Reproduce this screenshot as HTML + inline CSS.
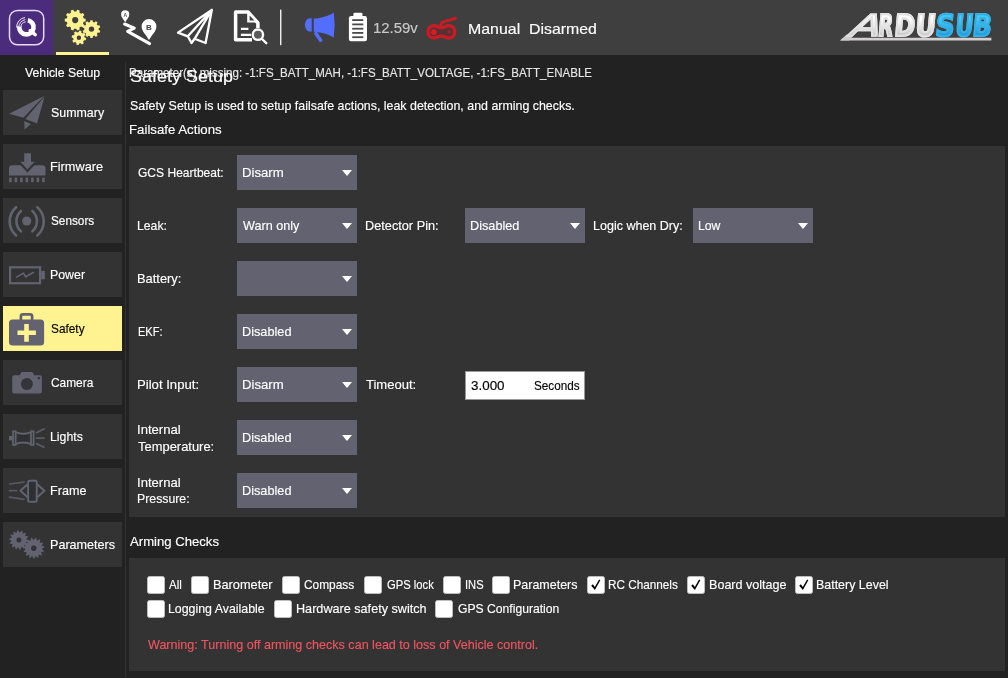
<!DOCTYPE html>
<html>
<head>
<meta charset="utf-8">
<title>Safety Setup</title>
<style>
html,body{margin:0;padding:0;}
body{width:1008px;height:678px;overflow:hidden;background:#222222;position:relative;
 font-family:"Liberation Sans",sans-serif;font-size:13px;color:#ffffff;}
.abs{position:absolute;}
.t{position:absolute;white-space:nowrap;color:#fff;transform-origin:0 0;-webkit-text-stroke:0.15px currentColor;}
#toolbar{left:0;top:0;width:1008px;height:55px;background:#3f3f3f;}
#qbox{left:0;top:0;width:53px;height:55px;background:#4b2c7c;}
.panel{position:absolute;background:#333333;}
.sb{position:absolute;left:3px;width:119px;height:45px;background:#333333;}
.sb.sel{background:#fff291;}
.combo{position:absolute;width:120px;height:35px;background:#626270;}
.combo:after{content:"";position:absolute;left:105px;top:14.5px;border-left:5px solid transparent;border-right:5px solid transparent;border-top:6px solid #fff;}
.cb{position:absolute;width:16px;height:16px;background:#fff;border:1px solid #bdbdbd;border-radius:2.5px;}
.cb svg{position:absolute;left:0;top:0;width:16px;height:16px;}
svg{position:absolute;overflow:visible;}
.logo{position:absolute;left:0;white-space:nowrap;font-family:"DejaVu Sans","Liberation Sans",sans-serif;font-weight:bold;}
.logo span{display:inline-block;transform-origin:0 23px;color:transparent;-webkit-background-clip:text;background-clip:text;paint-order:stroke fill;}
</style>
</head>
<body>
<div class="abs" style="left:0;top:0;width:1008px;height:678px;will-change:transform;">
<div id="toolbar" class="abs"></div>
<div id="qbox" class="abs"></div>
<div class="abs" style="left:56px;top:52px;width:53px;height:2.5px;background:#fff291;"></div>
<svg class="abs" style="left:0;top:0;" width="1008" height="55" viewBox="0 0 1008 55">
<rect x="9.5" y="10.4" width="34.2" height="34.4" rx="8" ry="8" fill="none" stroke="#ead9ff" stroke-width="1.5"/>
<path d="M27.90 20.16 A7.2 7.2 0 1 1 19.23 26.57" fill="none" stroke="#ffffff" stroke-width="4.6" stroke-linecap="butt"/>
<path d="M30.2 30.6 L35.2 34.6" stroke="#ffffff" stroke-width="3.4" stroke-linecap="round"/>
<path d="M21.00 27.39 A5.4 5.4 0 0 1 25.65 21.85" fill="none" stroke="#f0e4ff" stroke-width="1.0" stroke-linecap="butt"/>
<path d="M18.80 27.47 A7.6 7.6 0 0 1 25.34 19.67" fill="none" stroke="#f0e4ff" stroke-width="1.0" stroke-linecap="butt"/>
<path d="M16.61 27.54 A9.8 9.8 0 0 1 25.04 17.50" fill="none" stroke="#f0e4ff" stroke-width="1.0" stroke-linecap="butt"/>
<path fill="#fff291" fill-rule="evenodd" d="M83.64 18.44 L85.62 18.78 L85.62 21.42 L83.64 21.76 L83.00 23.71 L84.40 25.16 L82.85 27.29 L81.05 26.41 L79.39 27.61 L79.67 29.60 L77.17 30.41 L76.22 28.64 L74.18 28.64 L73.23 30.41 L70.73 29.60 L71.01 27.61 L69.35 26.41 L67.55 27.29 L66.00 25.16 L67.40 23.71 L66.76 21.76 L64.78 21.42 L64.78 18.78 L66.76 18.44 L67.40 16.49 L66.00 15.04 L67.55 12.91 L69.35 13.79 L71.01 12.59 L70.73 10.60 L73.23 9.79 L74.18 11.56 L76.22 11.56 L77.17 9.79 L79.67 10.60 L79.39 12.59 L81.05 13.79 L82.85 12.91 L84.40 15.04 L83.00 16.49 Z M78.30 20.10 A3.10 3.10 0 1 0 72.10 20.10 A3.10 3.10 0 1 0 78.30 20.10 Z"/>
<path fill="#fff291" fill-rule="evenodd" d="M98.65 29.93 L100.25 30.73 L99.57 32.86 L97.80 32.58 L96.80 33.97 L97.62 35.56 L95.82 36.88 L94.55 35.62 L92.92 36.16 L92.65 37.93 L90.42 37.93 L90.14 36.17 L88.50 35.65 L87.24 36.92 L85.43 35.61 L86.24 34.02 L85.23 32.63 L83.46 32.92 L82.76 30.80 L84.35 29.99 L84.35 28.27 L82.75 27.47 L83.43 25.34 L85.20 25.62 L86.20 24.23 L85.38 22.64 L87.18 21.32 L88.45 22.58 L90.08 22.04 L90.35 20.27 L92.58 20.27 L92.86 22.03 L94.50 22.55 L95.76 21.28 L97.57 22.59 L96.76 24.18 L97.77 25.57 L99.54 25.28 L100.24 27.40 L98.65 28.21 Z M94.20 29.10 A2.70 2.70 0 1 0 88.80 29.10 A2.70 2.70 0 1 0 94.20 29.10 Z"/>
<path fill="#fff291" fill-rule="evenodd" d="M84.59 37.55 L86.19 38.11 L85.74 40.35 L84.05 40.25 L83.10 41.65 L83.84 43.18 L81.93 44.44 L80.81 43.17 L79.15 43.49 L78.59 45.09 L76.35 44.64 L76.45 42.95 L75.05 42.00 L73.52 42.74 L72.26 40.83 L73.53 39.71 L73.21 38.05 L71.61 37.49 L72.06 35.25 L73.75 35.35 L74.70 33.95 L73.96 32.42 L75.87 31.16 L76.99 32.43 L78.65 32.11 L79.21 30.51 L81.45 30.96 L81.35 32.65 L82.75 33.60 L84.28 32.86 L85.54 34.77 L84.27 35.89 Z M81.10 37.80 A2.20 2.20 0 1 0 76.70 37.80 A2.20 2.20 0 1 0 81.10 37.80 Z"/>
<path d="M125.2 22.2 C123.6 19.2 121.1 17.2 121.1 14.4 A4.1 4.1 0 1 1 129.3 14.4 C129.3 17.2 126.8 19.2 125.2 22.2 Z" fill="#fff"/>
<path d="M149 40 C146 34.5 141.6 31 141.6 26.4 A7.4 7.4 0 1 1 156.4 26.4 C156.4 31 152 34.5 149 40 Z" fill="#fff"/>
<path d="M124.6 24 L134.3 28.1 L127.6 31.4 L149.6 43.6" fill="none" stroke="#fff" stroke-width="3" stroke-linecap="round" stroke-linejoin="round"/>
<text x="125.2" y="16.6" font-size="5" font-weight="bold" text-anchor="middle" fill="#555" font-family="Liberation Sans, sans-serif">A</text>
<text x="149" y="29.6" font-size="8" font-weight="bold" text-anchor="middle" fill="#444" font-family="Liberation Sans, sans-serif">B</text>
<path d="M211.8 10 L178 32.6 L187.8 36.3 L191.5 43 L194.6 38.8 L205.6 43 Z M211.8 10 L187.8 36.3 M211.8 10 L194.6 38.8" fill="none" stroke="#fff" stroke-width="2.3" stroke-linejoin="round" stroke-linecap="round"/>
<path d="M252 39.7 L235.6 39.7 L235.6 12 L248 12 L257.9 23 L257.9 28" fill="none" stroke="#fff" stroke-width="3.5" stroke-linejoin="round"/>
<path d="M247.2 12 L247.2 22.4 L257.9 22.4 Z" fill="#fff"/>
<path d="M249.6 15.6 L249.6 20.6 L254.4 20.6 Z" fill="#3f3f3f"/>
<path d="M240.9 28.9 L248.4 28.9 M240.9 34.9 L251 34.9" stroke="#fff" stroke-width="2.4"/>
<circle cx="257.9" cy="34.7" r="5.2" fill="#5a5a5a" stroke="#fff" stroke-width="2.4"/>
<path d="M262 39 L266.3 43.2" stroke="#fff" stroke-width="2.4" stroke-linecap="round"/>
<rect x="280.1" y="9.6" width="1.3" height="35.6" fill="#fff"/>
<path d="M311.7 18.2 L309.5 18.2 A4.6 6.6 0 0 0 309.5 31.4 L311.7 31.4 Z" fill="#536dff"/>
<path d="M313.8 18.6 C322 18 329 15.5 333.8 12.4 Q335.4 25 333.8 37.6 C329 34.5 322 32.2 313.8 31.8 Z" fill="#536dff"/>
<path d="M316 33.6 L320.6 40.2" stroke="#536dff" stroke-width="3.6" stroke-linecap="round"/>
<rect x="348.9" y="16.1" width="18.1" height="25.2" rx="2.2" fill="#fff"/>
<rect x="353.4" y="12.8" width="9.1" height="5" rx="1.2" fill="#fff"/>
<rect x="352.2" y="19.2" width="11.1" height="1.8" fill="#4a4a4a"/>
<rect x="352.2" y="23.5" width="11.1" height="1.8" fill="#4a4a4a"/>
<rect x="352.2" y="27.8" width="11.1" height="1.8" fill="#4a4a4a"/>
<rect x="352.2" y="32.0" width="11.1" height="1.8" fill="#4a4a4a"/>
<rect x="352.2" y="36.3" width="11.1" height="1.8" fill="#4a4a4a"/>
<path d="M434 25.8 C437.2 25.8 438.6 27.8 441.4 27.8 C444.2 27.8 445.6 25.8 448.8 25.8 C452.8 25.8 454.7 28.6 454.7 31.9 C454.7 35.2 452.8 37.9 448.8 37.9 C445.6 37.9 444.2 35.9 441.4 35.9 C438.6 35.9 437.2 37.9 434 37.9 C430 37.9 428.1 35.2 428.1 31.9 C428.1 28.6 430 25.8 434 25.8 Z" fill="#7a1a20" fill-opacity="0.35" stroke="#c41d26" stroke-width="3.5"/>
<circle cx="433.8" cy="32.2" r="2.9" fill="#e01822"/>
<circle cx="449" cy="31.9" r="1.8" fill="#c41d26" opacity="0.7"/>
<path d="M440.8 25 C440.8 20.5 447 21.5 455.4 18.2" fill="none" stroke="#c41d26" stroke-width="3.1" stroke-linecap="round"/>
<defs><linearGradient id="gw" x1="0" y1="0.2" x2="0" y2="0.85"><stop offset="0" stop-color="#ffffff"/><stop offset="1" stop-color="#c4c4c4"/></linearGradient>
<linearGradient id="gb" x1="0" y1="0.2" x2="0" y2="0.85"><stop offset="0" stop-color="#45c8f4"/><stop offset="1" stop-color="#2196d6"/></linearGradient></defs>
<path d="M840 40.5 L843 37.8 L991.4 37.8 L991.4 40.5 Z" fill="#d4cfcf"/>
<path d="M840.3 40.5 L846.6 34.6 L854.6 34.6 L849 40.5 Z" fill="#cbcbcb"/>
</svg>
<div class="logo" style="top:12.80px;font-size:24px;line-height:30px;height:30px;"><span style="font-weight:normal;transform:translate(846.74px,0) skewX(-27.4deg) scale(1.850,1.245);background-image:linear-gradient(#ffffff 30%,#c2c2c2 80%);-webkit-text-stroke:1.2px #e2e2e2;">A</span><span style="font-weight:bold;transform:translate(861.40px,0) skewX(-5deg) scale(0.790,1.245);background-image:linear-gradient(#ffffff 30%,#c2c2c2 80%);-webkit-text-stroke:1.8px #e2e2e2;">R</span><span style="font-weight:bold;transform:translate(858.65px,0) skewX(-5deg) scale(1.026,1.245);background-image:linear-gradient(#ffffff 30%,#c2c2c2 80%);-webkit-text-stroke:1.8px #e2e2e2;">D</span><span style="font-weight:bold;transform:translate(859.70px,0) skewX(-5deg) scale(1.040,1.245);background-image:linear-gradient(#ffffff 30%,#c2c2c2 80%);-webkit-text-stroke:1.8px #e2e2e2;">U</span><span style="font-weight:bold;transform:translate(861.01px,0) skewX(-5deg) scale(1.083,1.245);background-image:linear-gradient(#47c9f5 30%,#2095d6 80%);-webkit-text-stroke:1.8px #33b0e6;">S</span><span style="font-weight:bold;transform:translate(862.69px,0) skewX(-5deg) scale(0.909,1.245);background-image:linear-gradient(#47c9f5 30%,#2095d6 80%);-webkit-text-stroke:1.8px #33b0e6;">U</span><span style="font-weight:bold;transform:translate(860.96px,0) skewX(-5deg) scale(1.030,1.245);background-image:linear-gradient(#47c9f5 30%,#2095d6 80%);-webkit-text-stroke:1.8px #33b0e6;">B</span></div>

<!-- sidebar -->
<div class="abs" style="left:125px;top:62px;width:1px;height:616px;background:#333333;"></div>
<div class="sb" style="top:90px;"></div>
<div class="sb" style="top:144px;"></div>
<div class="sb" style="top:198px;"></div>
<div class="sb" style="top:252px;"></div>
<div class="sb sel" style="top:306px;"></div>
<div class="sb" style="top:360px;"></div>
<div class="sb" style="top:414px;"></div>
<div class="sb" style="top:468px;"></div>
<div class="sb" style="top:522px;"></div>
<svg class="abs" style="left:0;top:0;" width="126" height="678" viewBox="0 0 126 678">
<path d="M44.1 96 L9 113.7 L23.4 117.7 Z M44.6 96.6 L25.4 118.9 L37 123.6 Z M24.2 121 L24.6 129.6 L31 124 Z" fill="#626270"/>
<path d="M24.2 153.2 L31 153.2 L31 161.7 L34.6 161.7 L27.5 169.6 L20.4 161.7 L24.2 161.7 Z" fill="#626270"/>
<path d="M9 175.5 L9 168.4 Q9 165.2 12.2 165.2 L20.6 165.2 L27.5 172.6 L34.4 165.2 L42.3 165.2 Q45.5 165.2 45.5 168.4 L45.5 175.5 Z" fill="#626270"/>
<rect x="9.1" y="177.6" width="2.6" height="4.6" fill="#626270"/>
<rect x="14.6" y="177.6" width="2.6" height="4.6" fill="#626270"/>
<rect x="20.1" y="177.6" width="2.6" height="4.6" fill="#626270"/>
<rect x="25.6" y="177.6" width="2.6" height="4.6" fill="#626270"/>
<rect x="31.1" y="177.6" width="2.6" height="4.6" fill="#626270"/>
<rect x="36.6" y="177.6" width="2.6" height="4.6" fill="#626270"/>
<rect x="42.1" y="177.6" width="2.6" height="4.6" fill="#626270"/>
<circle cx="26.7" cy="221" r="4.6" fill="#626270"/>
<path d="M21 211 A13.6 13.6 0 0 0 21 231.3 M32.4 211 A13.6 13.6 0 0 1 32.4 231.3" fill="none" stroke="#626270" stroke-width="2.6" stroke-linecap="round"/>
<path d="M16.1 207.2 A18.8 18.8 0 0 0 16.1 235.5 M37.3 207.2 A18.8 18.8 0 0 1 37.3 235.5" fill="none" stroke="#626270" stroke-width="2.6" stroke-linecap="round"/>
<rect x="10.1" y="267.3" width="30" height="15.9" fill="none" stroke="#626270" stroke-width="2.2"/>
<rect x="41.2" y="270.8" width="3.6" height="8.5" fill="#626270"/>
<path d="M16.5 277.1 L23.5 273.2 L25.7 276.8 L33.4 272.5" fill="none" stroke="#626270" stroke-width="1.6" stroke-linecap="round" stroke-linejoin="round"/>
<rect x="9" y="319.5" width="35.1" height="26.1" rx="3.6" fill="#626270"/>
<path d="M20.9 320 L20.9 316.4 Q20.9 314.4 22.9 314.4 L30.1 314.4 Q32.1 314.4 32.1 316.4 L32.1 320" fill="none" stroke="#626270" stroke-width="2.7"/>
<path d="M17.5 332.8 L35.9 332.8 M26.5 324 L26.5 341.7" stroke="#fff291" stroke-width="4.6" fill="none"/>
<path d="M14.2 375.2 L19.6 375.2 L21.6 372 L32.2 372 L34.2 375.2 L39.9 375.2 Q41.9 375.2 41.9 377.2 L41.9 391.6 Q41.9 393.6 39.9 393.6 L14.2 393.6 Q12.2 393.6 12.2 391.6 L12.2 377.2 Q12.2 375.2 14.2 375.2 Z" fill="#626270"/>
<circle cx="26.9" cy="384" r="6" fill="#34343a"/>
<rect x="37.8" y="377" width="2.2" height="2.2" fill="#34343a"/>
<rect x="9" y="436" width="3.4" height="4.3" fill="#626270"/>
<rect x="13" y="431.3" width="2.6" height="13.6" fill="none" stroke="#626270" stroke-width="1.8"/>
<rect x="31" y="431.3" width="2.6" height="13.6" fill="none" stroke="#626270" stroke-width="1.8"/>
<path d="M16 432.4 Q23.3 435 30.6 432.4 M16 443.8 Q23.3 441.2 30.6 443.8" fill="none" stroke="#626270" stroke-width="1.9"/>
<rect x="19" y="435" width="9" height="6.2" fill="#2e2e33"/>
<path d="M36.6 432.6 L44 429 M36.6 438.1 L44 438.1 M36.6 443.6 L44 447.2" fill="none" stroke="#626270" stroke-width="1.8" stroke-linecap="round" opacity="0.85"/>
<rect x="28.1" y="480.7" width="8.6" height="21" rx="1.5" fill="#2e2e33" stroke="#626270" stroke-width="2"/>
<path d="M27.6 484.2 L20.4 490.7 L27.6 497.2 M37.2 484.2 L44.4 490.7 L37.2 497.2" fill="none" stroke="#626270" stroke-width="2" stroke-linejoin="round"/>
<path d="M9.5 484 L24 482.2 M9.5 490.7 L16.5 490.7 M9.5 497.2 L24 499.3" fill="none" stroke="#626270" stroke-width="1.7" stroke-linecap="round" opacity="0.8"/>
<path fill="#626270" fill-rule="evenodd" d="M26.58 539.39 L28.59 540.53 L28.50 541.40 L26.30 542.12 L26.08 542.78 L27.39 544.68 L26.94 545.43 L24.65 545.13 L24.16 545.62 L24.52 547.91 L23.79 548.38 L21.85 547.11 L21.20 547.35 L20.53 549.56 L19.67 549.67 L18.48 547.69 L17.79 547.62 L16.22 549.32 L15.40 549.05 L15.18 546.74 L14.59 546.38 L12.44 547.24 L11.82 546.63 L12.62 544.46 L12.25 543.88 L9.94 543.72 L9.64 542.90 L11.31 541.30 L11.22 540.61 L9.21 539.47 L9.30 538.60 L11.50 537.88 L11.72 537.22 L10.41 535.32 L10.86 534.57 L13.15 534.87 L13.64 534.38 L13.28 532.09 L14.01 531.62 L15.95 532.89 L16.60 532.65 L17.27 530.44 L18.13 530.33 L19.32 532.31 L20.01 532.38 L21.58 530.68 L22.40 530.95 L22.62 533.26 L23.21 533.62 L25.36 532.76 L25.98 533.37 L25.18 535.54 L25.55 536.12 L27.86 536.28 L28.16 537.10 L26.49 538.70 Z M21.40 540.00 A2.50 2.50 0 1 0 16.40 540.00 A2.50 2.50 0 1 0 21.40 540.00 Z"/>
<path fill="#626270" fill-rule="evenodd" d="M42.13 549.31 L43.95 550.88 L43.69 551.72 L41.30 551.99 L40.96 552.60 L41.98 554.78 L41.41 555.44 L39.11 554.71 L38.55 555.13 L38.60 557.54 L37.80 557.91 L36.00 556.31 L35.32 556.46 L34.39 558.68 L33.51 558.70 L32.52 556.50 L31.83 556.36 L30.07 558.02 L29.26 557.67 L29.25 555.26 L28.68 554.86 L26.40 555.65 L25.81 555.01 L26.77 552.80 L26.41 552.20 L24.01 552.00 L23.73 551.17 L25.51 549.54 L25.42 548.85 L23.31 547.69 L23.39 546.81 L25.68 546.06 L25.89 545.38 L24.43 543.47 L24.86 542.70 L27.25 542.94 L27.72 542.41 L27.16 540.06 L27.87 539.54 L29.96 540.73 L30.60 540.43 L31.05 538.07 L31.90 537.87 L33.33 539.81 L34.03 539.80 L35.40 537.82 L36.27 537.99 L36.78 540.35 L37.43 540.62 L39.49 539.37 L40.20 539.88 L39.72 542.24 L40.20 542.75 L42.58 542.45 L43.04 543.20 L41.63 545.16 L41.86 545.83 L44.16 546.52 L44.27 547.39 L42.19 548.61 Z M36.50 548.20 A2.70 2.70 0 1 0 31.10 548.20 A2.70 2.70 0 1 0 36.50 548.20 Z"/>
</svg>

<!-- main -->
<div class="panel" style="left:129px;top:146px;width:876px;height:371px;"></div>
<div class="combo" style="left:237px;top:155px;"></div>
<div class="combo" style="left:237px;top:208px;"></div>
<div class="combo" style="left:465px;top:208px;"></div>
<div class="combo" style="left:693px;top:208px;"></div>
<div class="combo" style="left:237px;top:261px;"></div>
<div class="combo" style="left:237px;top:314px;"></div>
<div class="combo" style="left:237px;top:367px;"></div>
<div class="abs" style="left:465px;top:371px;width:118px;height:27px;background:#fff;border:1px solid #999;"></div>
<div class="combo" style="left:237px;top:420px;"></div>
<div class="combo" style="left:237px;top:473px;"></div>

<div class="panel" style="left:129px;top:558px;width:876px;height:113px;"></div>
<div class="cb" style="left:147px;top:576px;"></div>
<div class="cb" style="left:191px;top:576px;"></div>
<div class="cb" style="left:282px;top:576px;"></div>
<div class="cb" style="left:364px;top:576px;"></div>
<div class="cb" style="left:443px;top:576px;"></div>
<div class="cb" style="left:492px;top:576px;"></div>
<div class="cb" style="left:587px;top:576px;"><svg viewBox="0 0 16 16"><path d="M3.2 8.8 L4.9 7.2 L6.8 9.9 L11.1 2.6 L12.3 3.3 L6.9 13 Z" fill="#000"/></svg>
</div>
<div class="cb" style="left:687px;top:576px;"><svg viewBox="0 0 16 16"><path d="M3.2 8.8 L4.9 7.2 L6.8 9.9 L11.1 2.6 L12.3 3.3 L6.9 13 Z" fill="#000"/></svg>
</div>
<div class="cb" style="left:795px;top:576px;"><svg viewBox="0 0 16 16"><path d="M3.2 8.8 L4.9 7.2 L6.8 9.9 L11.1 2.6 L12.3 3.3 L6.9 13 Z" fill="#000"/></svg>
</div>
<div class="cb" style="left:147px;top:600px;"></div>
<div class="cb" style="left:274px;top:600px;"></div>
<div class="cb" style="left:435px;top:600px;"></div>

<div class="t" style="left:25.00px;top:64.50px;font-size:13px;line-height:16px;height:16px;transform:scaleX(0.9448);">Vehicle Setup</div>
<div class="t" style="left:51.30px;top:104.50px;font-size:13px;line-height:16px;height:16px;transform:scaleX(0.9551);">Summary</div>
<div class="t" style="left:50.42px;top:158.50px;font-size:13px;line-height:16px;height:16px;transform:scaleX(0.9805);">Firmware</div>
<div class="t" style="left:51.40px;top:212.50px;font-size:13px;line-height:16px;height:16px;transform:scaleX(0.9068);">Sensors</div>
<div class="t" style="left:50.45px;top:266.50px;font-size:13px;line-height:16px;height:16px;transform:scaleX(0.9502);">Power</div>
<div class="t" style="left:51.40px;top:320.50px;font-size:13px;line-height:16px;height:16px;transform:scaleX(0.9102);color:#000000;">Safety</div>
<div class="t" style="left:51.40px;top:374.50px;font-size:13px;line-height:16px;height:16px;transform:scaleX(0.9148);">Camera</div>
<div class="t" style="left:50.45px;top:428.50px;font-size:13px;line-height:16px;height:16px;transform:scaleX(0.9476);">Lights</div>
<div class="t" style="left:50.43px;top:482.50px;font-size:13px;line-height:16px;height:16px;transform:scaleX(0.9689);">Frame</div>
<div class="t" style="left:50.43px;top:536.50px;font-size:13px;line-height:16px;height:16px;transform:scaleX(0.9672);">Parameters</div>
<div class="t" style="left:128.71px;top:64.50px;font-size:13px;line-height:16px;height:16px;transform:scaleX(0.8899);color:#e6e6e6;">Parameter(s) missing: -1:FS_BATT_MAH, -1:FS_BATT_VOLTAGE, -1:FS_BATT_ENABLE</div>
<div class="t" style="left:129.60px;top:67.11px;font-size:17px;line-height:20px;height:20px;transform:scaleX(1.0569);">Safety Setup</div>
<div class="t" style="left:129.60px;top:97.50px;font-size:13px;line-height:16px;height:16px;transform:scaleX(0.9543);">Safety Setup is used to setup failsafe actions, leak detection, and arming checks.</div>
<div class="t" style="left:128.58px;top:121.50px;font-size:13px;line-height:16px;height:16px;transform:scaleX(1.0180);">Failsafe Actions</div>
<div class="t" style="left:138.40px;top:164.50px;font-size:13px;line-height:16px;height:16px;transform:scaleX(0.9263);">GCS Heartbeat:</div>
<div class="t" style="left:242.09px;top:164.50px;font-size:13px;line-height:16px;height:16px;transform:scaleX(1.0118);">Disarm</div>
<div class="t" style="left:137.46px;top:217.50px;font-size:13px;line-height:16px;height:16px;transform:scaleX(0.9407);">Leak:</div>
<div class="t" style="left:243.10px;top:217.50px;font-size:13px;line-height:16px;height:16px;transform:scaleX(0.9703);">Warn only</div>
<div class="t" style="left:365.22px;top:217.50px;font-size:13px;line-height:16px;height:16px;transform:scaleX(0.9792);">Detector Pin:</div>
<div class="t" style="left:470.22px;top:217.50px;font-size:13px;line-height:16px;height:16px;transform:scaleX(0.9766);">Disabled</div>
<div class="t" style="left:593.24px;top:217.50px;font-size:13px;line-height:16px;height:16px;transform:scaleX(0.9629);">Logic when Dry:</div>
<div class="t" style="left:698.26px;top:217.50px;font-size:13px;line-height:16px;height:16px;transform:scaleX(0.9420);">Low</div>
<div class="t" style="left:137.41px;top:270.50px;font-size:13px;line-height:16px;height:16px;transform:scaleX(0.9911);">Battery:</div>
<div class="t" style="left:137.55px;top:323.50px;font-size:13px;line-height:16px;height:16px;transform:scaleX(0.8504);">EKF:</div>
<div class="t" style="left:242.12px;top:323.50px;font-size:13px;line-height:16px;height:16px;transform:scaleX(0.9786);">Disabled</div>
<div class="t" style="left:137.39px;top:376.50px;font-size:13px;line-height:16px;height:16px;transform:scaleX(1.0098);">Pilot Input:</div>
<div class="t" style="left:242.09px;top:376.50px;font-size:13px;line-height:16px;height:16px;transform:scaleX(1.0118);">Disarm</div>
<div class="t" style="left:366.20px;top:376.50px;font-size:13px;line-height:16px;height:16px;transform:scaleX(1.0025);">Timeout:</div>
<div class="t" style="left:470.70px;top:377.50px;font-size:13px;line-height:16px;height:16px;transform:scaleX(1.0309);color:#000000;">3.000</div>
<div class="t" style="left:533.60px;top:377.50px;font-size:13px;line-height:16px;height:16px;transform:scaleX(0.9004);color:#000000;">Seconds</div>
<div class="t" style="left:137.39px;top:421.50px;font-size:13px;line-height:16px;height:16px;transform:scaleX(1.0077);">Internal</div>
<div class="t" style="left:138.40px;top:438.50px;font-size:13px;line-height:16px;height:16px;transform:scaleX(0.9950);">Temperature:</div>
<div class="t" style="left:242.12px;top:429.50px;font-size:13px;line-height:16px;height:16px;transform:scaleX(0.9786);">Disabled</div>
<div class="t" style="left:137.39px;top:474.50px;font-size:13px;line-height:16px;height:16px;transform:scaleX(1.0077);">Internal</div>
<div class="t" style="left:137.45px;top:491.00px;font-size:13px;line-height:16px;height:16px;transform:scaleX(0.9460);">Pressure:</div>
<div class="t" style="left:242.12px;top:482.50px;font-size:13px;line-height:16px;height:16px;transform:scaleX(0.9786);">Disabled</div>
<div class="t" style="left:129.60px;top:534.00px;font-size:13px;line-height:16px;height:16px;transform:scaleX(1.0097);">Arming Checks</div>
<div class="t" style="left:169.40px;top:576.50px;font-size:13px;line-height:16px;height:16px;transform:scaleX(0.8860);">All</div>
<div class="t" style="left:212.52px;top:576.50px;font-size:13px;line-height:16px;height:16px;transform:scaleX(0.9824);">Barometer</div>
<div class="t" style="left:304.30px;top:576.50px;font-size:13px;line-height:16px;height:16px;transform:scaleX(0.9150);">Compass</div>
<div class="t" style="left:386.50px;top:576.50px;font-size:13px;line-height:16px;height:16px;transform:scaleX(0.8631);">GPS lock</div>
<div class="t" style="left:464.54px;top:576.50px;font-size:13px;line-height:16px;height:16px;transform:scaleX(0.8571);">INS</div>
<div class="t" style="left:513.44px;top:576.50px;font-size:13px;line-height:16px;height:16px;transform:scaleX(0.9597);">Parameters</div>
<div class="t" style="left:608.40px;top:576.50px;font-size:13px;line-height:16px;height:16px;transform:scaleX(0.9035);">RC Channels</div>
<div class="t" style="left:708.63px;top:576.50px;font-size:13px;line-height:16px;height:16px;transform:scaleX(0.9672);">Board voltage</div>
<div class="t" style="left:816.34px;top:576.50px;font-size:13px;line-height:16px;height:16px;transform:scaleX(0.9562);">Battery Level</div>
<div class="t" style="left:168.45px;top:600.50px;font-size:13px;line-height:16px;height:16px;transform:scaleX(0.9509);">Logging Available</div>
<div class="t" style="left:295.53px;top:600.50px;font-size:13px;line-height:16px;height:16px;transform:scaleX(0.9718);">Hardware safety switch</div>
<div class="t" style="left:457.70px;top:600.50px;font-size:13px;line-height:16px;height:16px;transform:scaleX(0.9347);">GPS Configuration</div>
<div class="t" style="left:147.70px;top:637.00px;font-size:13px;line-height:16px;height:16px;transform:scaleX(0.9662);color:#ee5560;">Warning: Turning off arming checks can lead to loss of Vehicle control.</div>
<div class="t" style="left:372.68px;top:20.40px;font-size:14px;line-height:17px;height:17px;transform:scaleX(1.0662);color:#c8c8c8;">12.59v</div>
<div class="t" style="left:468.19px;top:19.55px;font-size:15px;line-height:18px;height:18px;transform:scaleX(1.0603);">Manual</div>
<div class="t" style="left:529.44px;top:19.55px;font-size:15px;line-height:18px;height:18px;transform:scaleX(1.0582);">Disarmed</div>
</div>
</body>
</html>
